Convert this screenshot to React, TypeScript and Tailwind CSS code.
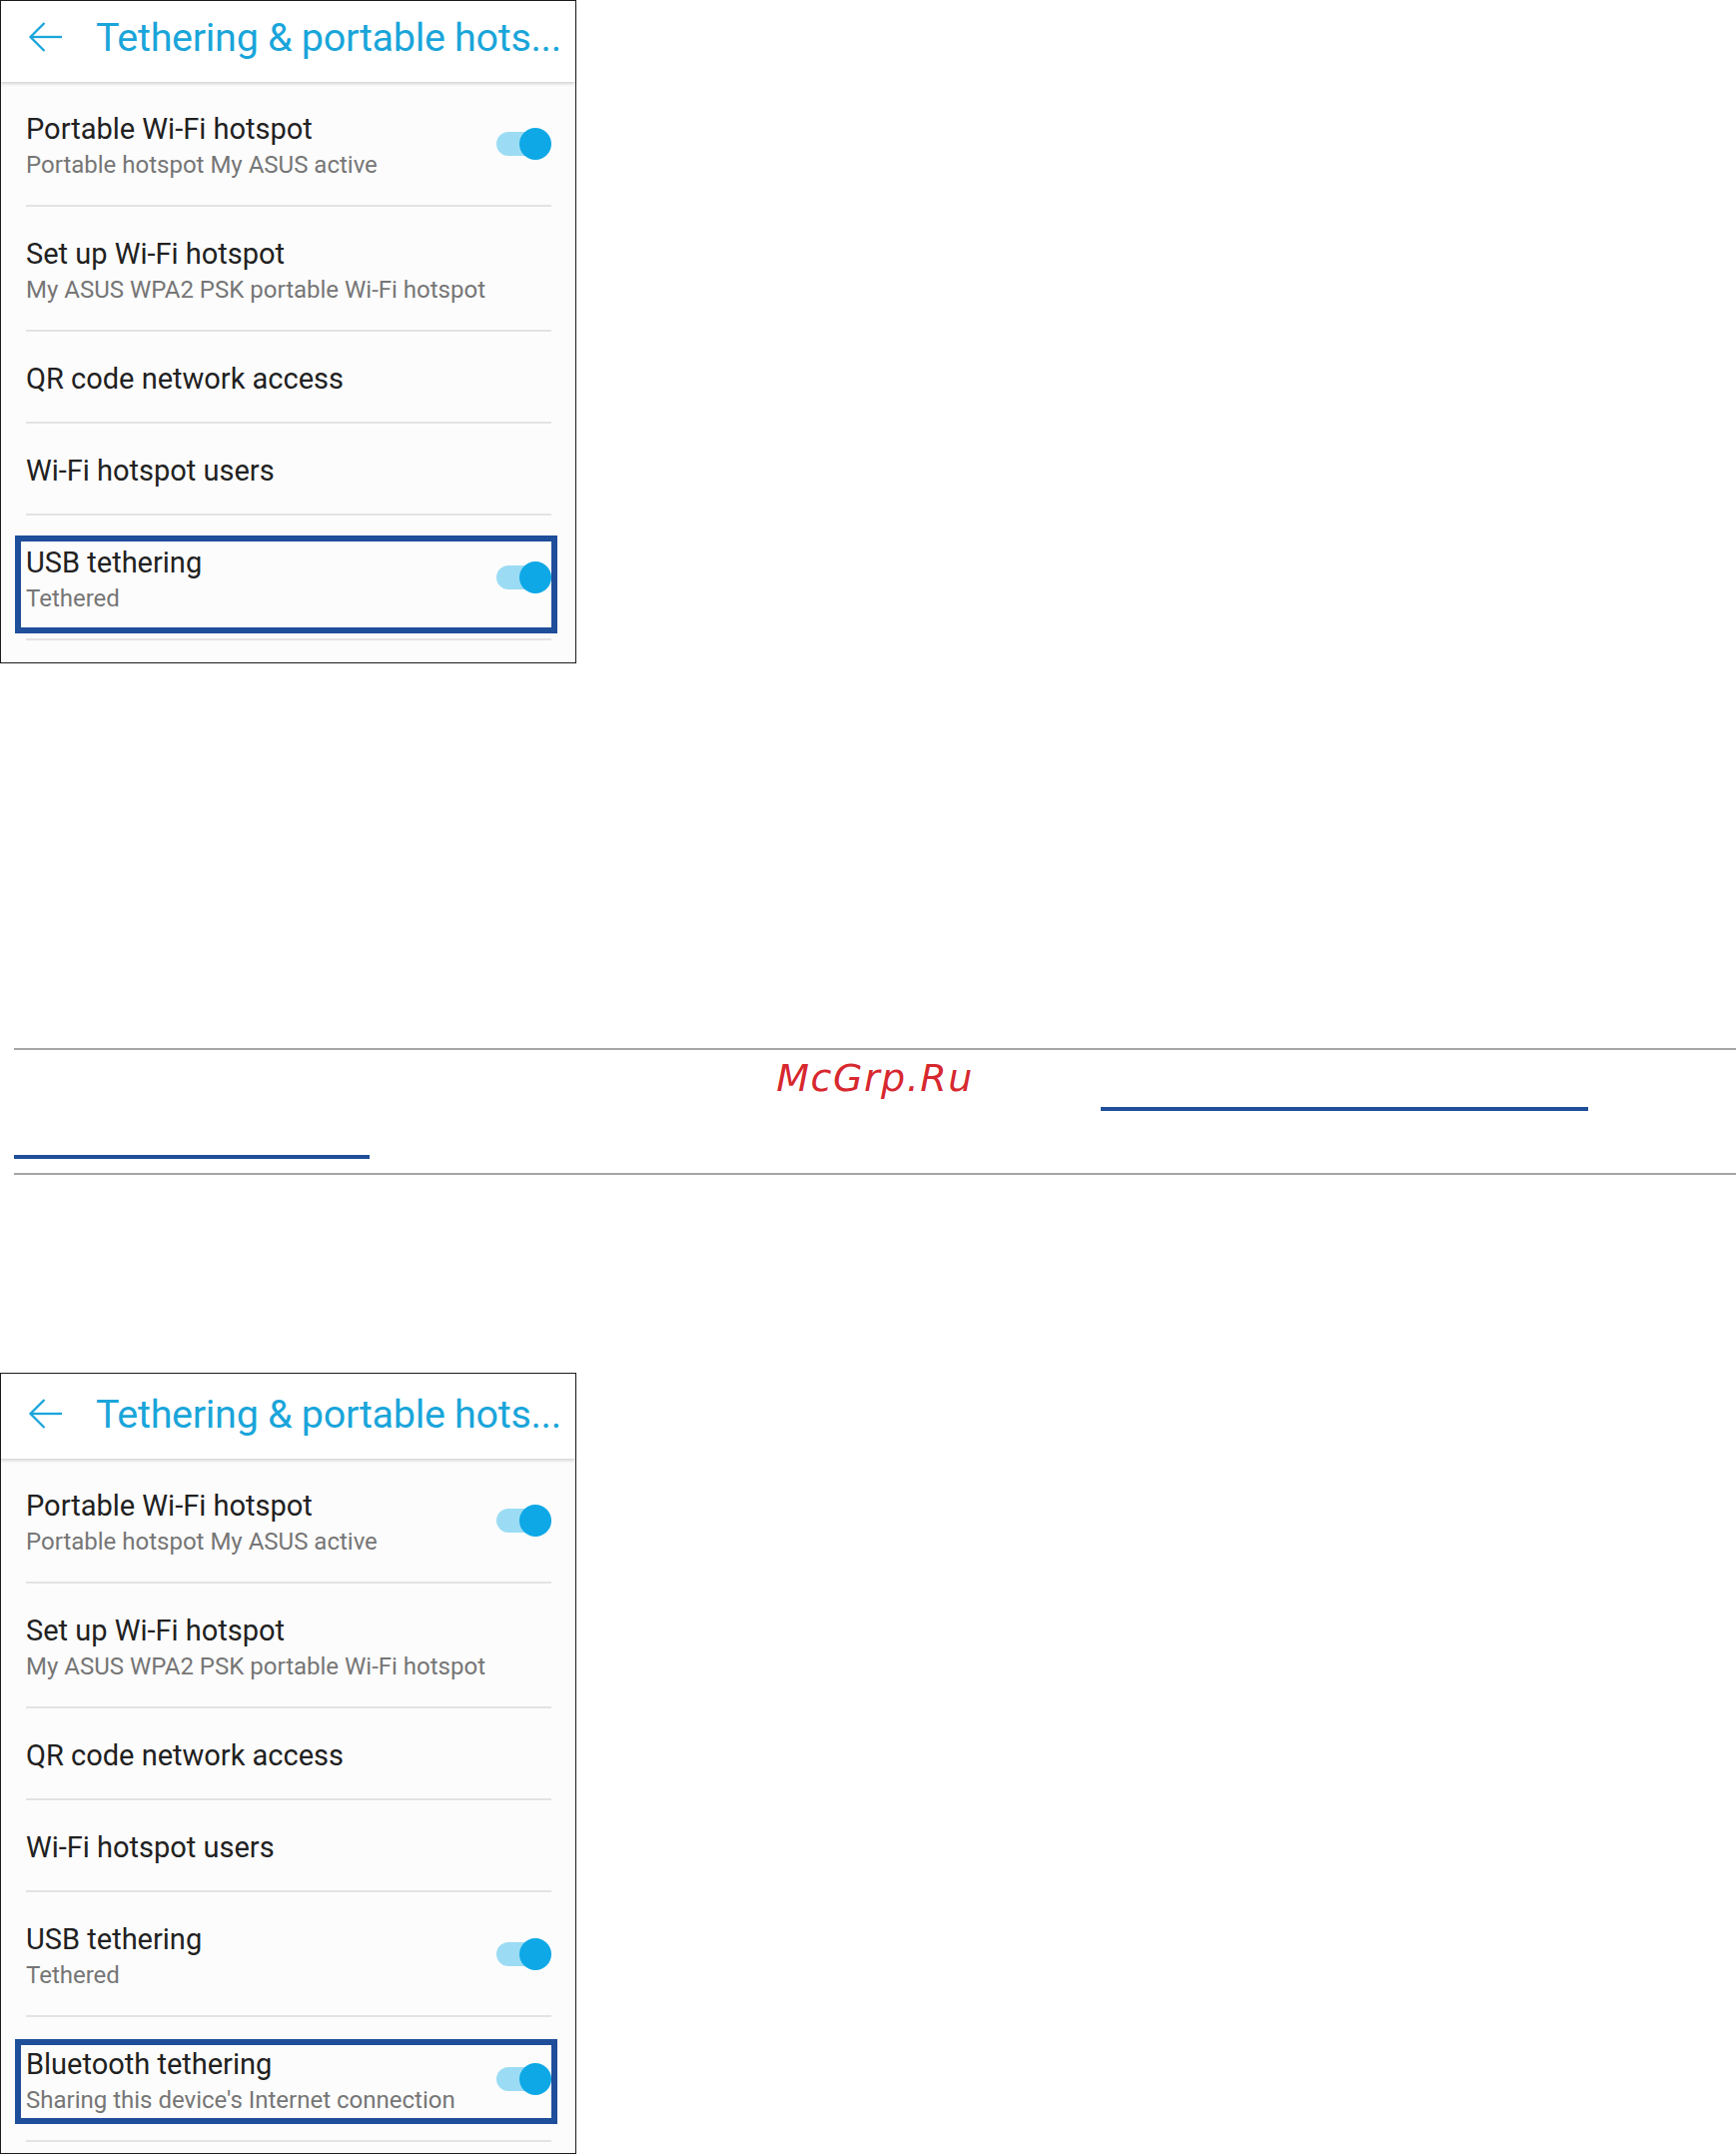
import React from "react";

function Toggle() {
  return (
    <div className="relative h-[32px] w-[55px] shrink-0">
      <div className="absolute left-0 top-[4px] h-[24px] w-[50px] rounded-full bg-[#9bdcf4]" />
      <div className="absolute right-0 top-0 h-[32px] w-[32px] rounded-full bg-[#0ea8e6]" />
    </div>
  );
}

function BackArrow() {
  return (
    <svg
      width="34"
      height="30"
      viewBox="0 0 34 30"
      fill="none"
      stroke="#1aa5da"
      strokeWidth="2.3"
      strokeLinecap="butt"
      strokeLinejoin="miter"
      className="mt-[8px] shrink-0"
    >
      <path d="M34 15 H2.5" />
      <path d="M16.5 1 L2.5 15 L16.5 29" />
    </svg>
  );
}

function Header({ tall }: { tall?: boolean }) {
  return (
    <div
      className={`relative z-10 flex items-start bg-white pl-[27px] shadow-[0_2px_3px_rgba(0,0,0,0.16)] ${
        tall ? "h-[85px] pt-[17px]" : "h-[81px] pt-[13px]"
      }`}
    >
      <BackArrow />
      <span className="ml-[34px] whitespace-nowrap text-[39.5px] leading-[48px] tracking-[-0.3px] text-[#1aa5da]">
        Tethering &amp; portable hots...
      </span>
    </div>
  );
}

type RowData = {
  title: string;
  sub?: string;
  toggle?: boolean;
  box?: string;
};

function Row({ title, sub, toggle, box }: RowData) {
  return (
    <>
      <div
        className={`relative flex items-center justify-between ${
          sub ? "h-[123px]" : "h-[90px]"
        }`}
      >
        <div className="pt-[4px]">
          <div className="whitespace-nowrap text-[29px] leading-[34px] text-[#212121]">
            {title}
          </div>
          {sub && (
            <div className="mt-[5px] whitespace-nowrap text-[24px] leading-[28px] text-[#767676]">
              {sub}
            </div>
          )}
        </div>
        {toggle && <Toggle />}
        {box && (
          <div
            className={`pointer-events-none absolute left-[-11px] right-[-6px] border-[6px] border-[#1f4e9a] ${box}`}
          />
        )}
      </div>
      <div className="h-[2px] bg-[#e3e3e3]" />
    </>
  );
}

function Panel({
  rows,
  tall,
  bottomPad,
}: {
  rows: RowData[];
  tall?: boolean;
  bottomPad: string;
}) {
  return (
    <div className="w-[577px] border border-[#1c1c1c] bg-[#fcfcfc]">
      <Header tall={tall} />
      <div className={`pl-[25px] pr-[24px] ${bottomPad}`}>
        {rows.map((r, i) => (
          <Row key={i} {...r} />
        ))}
      </div>
    </div>
  );
}

const baseRows: RowData[] = [
  {
    title: "Portable Wi-Fi hotspot",
    sub: "Portable hotspot My ASUS active",
    toggle: true,
  },
  {
    title: "Set up Wi-Fi hotspot",
    sub: "My ASUS WPA2 PSK portable Wi-Fi hotspot",
  },
  { title: "QR code network access" },
  { title: "Wi-Fi hotspot users" },
];

const topRows: RowData[] = [
  ...baseRows,
  {
    title: "USB tethering",
    sub: "Tethered",
    toggle: true,
    box: "top-[20px] bottom-[5px]",
  },
];

const bottomRows: RowData[] = [
  ...baseRows,
  { title: "USB tethering", sub: "Tethered", toggle: true },
  {
    title: "Bluetooth tethering",
    sub: "Sharing this device's Internet connection",
    toggle: true,
    box: "top-[22px] bottom-[16px]",
  },
];

export default function App() {
  return (
    <div className="min-h-[2157px] w-[1738px] bg-white font-[Roboto,sans-serif]">
      <Panel rows={topRows} bottomPad="pb-[22px]" />

      <div className="ml-[14px] mt-[385px]">
        <div className="h-[2px] bg-[#a6a6a6]" />
        <div className="mt-[6px] text-center font-['DejaVu_Sans',sans-serif] text-[38px] italic leading-[44px] tracking-[1.5px] text-[#d7282f]">
          McGrp.Ru
        </div>
        <div className="ml-[1088px] mt-[7px] h-[4px] w-[488px] bg-[#1f4f99]" />
        <div className="mt-[44px] h-[4px] w-[356px] bg-[#1f4f99]" />
        <div className="mt-[14px] h-[2px] bg-[#a6a6a6]" />
      </div>

      <div className="mt-[198px]">
        <Panel rows={bottomRows} tall bottomPad="pb-[11px]" />
      </div>
    </div>
  );
}
